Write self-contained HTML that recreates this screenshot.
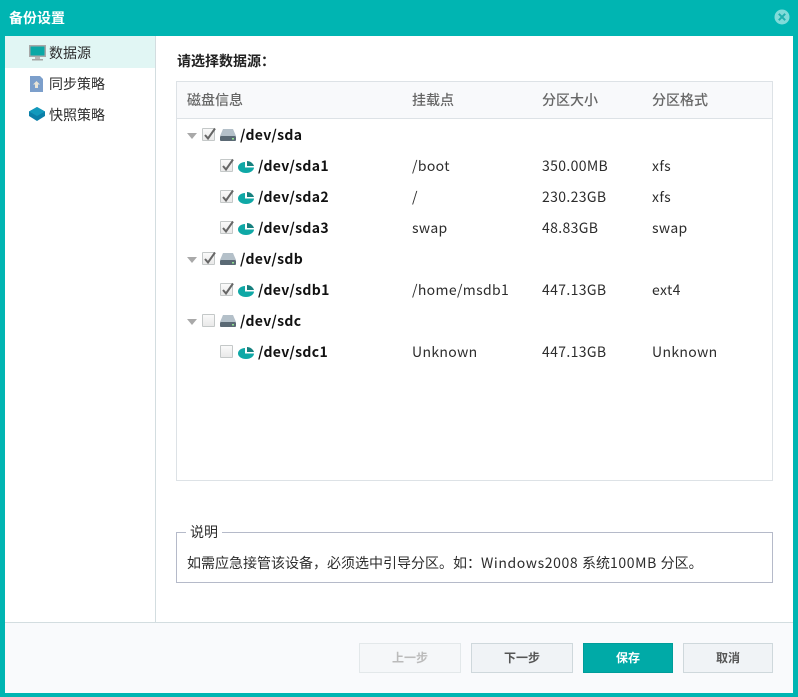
<!DOCTYPE html>
<html lang="zh">
<head>
<meta charset="utf-8">
<style>
html,body{margin:0;padding:0;}
body{width:798px;height:697px;position:relative;overflow:hidden;background:#00b5b2;font-family:"Noto Sans CJK SC","Liberation Sans",sans-serif;font-size:14px;color:#2c2c2c;}
.a{position:absolute;white-space:nowrap;line-height:20px;}
.l{letter-spacing:.35px;}
.box{position:absolute;box-sizing:border-box;}
.b{font-weight:700;color:#111;letter-spacing:.35px;}
.th{font-weight:500;color:#666;font-size:14px;}
.cb{position:absolute;width:13px;height:13px;box-sizing:border-box;border:1px solid #c4c8c8;background:linear-gradient(#fafafa,#e9e9e9);border-radius:1px;}
svg{position:absolute;overflow:visible;}
.btn{position:absolute;top:643px;height:30px;box-sizing:border-box;border:1px solid #cfd8dc;background:#f0f3f6;text-align:center;line-height:28px;font-size:12px;font-weight:700;color:#555;}
</style>
</head>
<body>
<div class="a" style="left:9px;top:8px;color:#fff;font-weight:700;font-size:14px;">备份设置</div>
<svg style="left:774px;top:9px" width="16" height="16" viewBox="0 0 16 16"><circle cx="8" cy="8" r="7.5" fill="#80dbd9"/><path d="M4.800 4.800L11.200 11.200M11.200 4.800L4.800 11.200" stroke="#1fb0ae" stroke-width="2"/></svg>

<div class="box" style="left:5px;top:36px;width:788px;height:657px;background:#fff;"></div>
<div class="box" style="left:155px;top:36px;width:1px;height:586px;background:#d3dde0;"></div>
<div class="box" style="left:5px;top:36px;width:150px;height:32px;background:#e1f6f4;"></div>

<svg style="left:29px;top:45px" width="17" height="16" viewBox="0 0 17 16"><rect x=".75" y=".75" width="15.500" height="10.500" fill="#0aa8a6" stroke="#a8a8a8" stroke-width="1.500"/><rect x="6" y="12" width="5" height="2" fill="#b5b5b5"/><rect x="3" y="14" width="11" height="1.500" fill="#a5a5a5"/></svg>
<div class="a" style="left:49px;top:43px;">数据源</div>
<svg style="left:30px;top:76px" width="13" height="16" viewBox="0 0 13 16"><path d="M0 0H10L13 3V16H0Z" fill="#7c9fcb"/><path d="M6.500 5L10 8.500H8V12H5V8.500H3Z" fill="#e9e4d6"/></svg>
<div class="a" style="left:49px;top:74px;">同步策略</div>
<svg style="left:29px;top:107px" width="16" height="14" viewBox="0 0 16 14"><path d="M8 0L16 4.500V9L8 14L0 9V4.500Z" fill="#0b7fa8"/><path d="M8 0L16 4.500L8 9L0 4.500Z" fill="#1299bc"/></svg>
<div class="a" style="left:49px;top:105px;">快照策略</div>

<div class="a" style="left:177px;top:51px;font-weight:700;color:#222;font-size:14px;">请选择数据源：</div>

<div class="box" style="left:176px;top:81px;width:597px;height:400px;border:1px solid #dde2e6;background:#fff;"></div>
<div class="box" style="left:177px;top:82px;width:595px;height:37px;background:#f8f9fb;border-bottom:1px solid #dde2e6;"></div>
<div class="a th" style="left:187px;top:90px;">磁盘信息</div>
<div class="a th" style="left:412px;top:90px;">挂载点</div>
<div class="a th" style="left:542px;top:90px;">分区大小</div>
<div class="a th" style="left:652px;top:90px;">分区格式</div>

<!-- sda -->
<svg style="left:187px;top:133px" width="10" height="6" viewBox="0 0 10 6"><path d="M0 0H10L5 6Z" fill="#a9a9a9"/></svg>
<div class="cb" style="left:202px;top:128px"></div>
<svg style="left:203px;top:128px" width="13" height="12" viewBox="0 0 13 12"><path d="M2 7L5 10.500L12 .5" fill="none" stroke="#666" stroke-width="2"/></svg>
<svg style="left:220px;top:129px" width="16" height="12" viewBox="0 0 16 12"><path d="M3 0H13L16 7H0Z" fill="#b4c0c9"/><rect y="7" width="16" height="5" rx="1" fill="#5a6974"/><rect x="12" y="9" width="2" height="1.500" fill="#8fe08f"/></svg>
<div class="a b" style="left:240px;top:125px;">/dev/sda</div>

<div class="cb" style="left:220px;top:159px"></div>
<svg style="left:221px;top:159px" width="13" height="12" viewBox="0 0 13 12"><path d="M2 7L5 10.500L12 .5" fill="none" stroke="#666" stroke-width="2"/></svg>
<svg style="left:238px;top:161px" width="16" height="12" viewBox="0 0 16 12"><path d="M7 1C3 1 0 3.500 0 6.500C0 9.500 3.500 12 8 12C12.500 12 16 9.500 16 6.500H7Z" fill="#0fa8a6"/><path d="M9 0C12 0 15 2 16 5H9Z" fill="#17807e"/></svg>
<div class="a b" style="left:258px;top:156px;">/dev/sda1</div>
<div class="a l" style="left:412px;top:156px;">/boot</div>
<div class="a l" style="left:542px;top:156px;">350.00MB</div>
<div class="a l" style="left:652px;top:156px;">xfs</div>

<div class="cb" style="left:220px;top:190px"></div>
<svg style="left:221px;top:190px" width="13" height="12" viewBox="0 0 13 12"><path d="M2 7L5 10.500L12 .5" fill="none" stroke="#666" stroke-width="2"/></svg>
<svg style="left:238px;top:192px" width="16" height="12" viewBox="0 0 16 12"><path d="M7 1C3 1 0 3.500 0 6.500C0 9.500 3.500 12 8 12C12.500 12 16 9.500 16 6.500H7Z" fill="#0fa8a6"/><path d="M9 0C12 0 15 2 16 5H9Z" fill="#17807e"/></svg>
<div class="a b" style="left:258px;top:187px;">/dev/sda2</div>
<div class="a l" style="left:412px;top:187px;">/</div>
<div class="a l" style="left:542px;top:187px;">230.23GB</div>
<div class="a l" style="left:652px;top:187px;">xfs</div>

<div class="cb" style="left:220px;top:221px"></div>
<svg style="left:221px;top:221px" width="13" height="12" viewBox="0 0 13 12"><path d="M2 7L5 10.500L12 .5" fill="none" stroke="#666" stroke-width="2"/></svg>
<svg style="left:238px;top:223px" width="16" height="12" viewBox="0 0 16 12"><path d="M7 1C3 1 0 3.500 0 6.500C0 9.500 3.500 12 8 12C12.500 12 16 9.500 16 6.500H7Z" fill="#0fa8a6"/><path d="M9 0C12 0 15 2 16 5H9Z" fill="#17807e"/></svg>
<div class="a b" style="left:258px;top:218px;">/dev/sda3</div>
<div class="a l" style="left:412px;top:218px;">swap</div>
<div class="a l" style="left:542px;top:218px;">48.83GB</div>
<div class="a l" style="left:652px;top:218px;">swap</div>

<!-- sdb -->
<svg style="left:187px;top:257px" width="10" height="6" viewBox="0 0 10 6"><path d="M0 0H10L5 6Z" fill="#a9a9a9"/></svg>
<div class="cb" style="left:202px;top:252px"></div>
<svg style="left:203px;top:252px" width="13" height="12" viewBox="0 0 13 12"><path d="M2 7L5 10.500L12 .5" fill="none" stroke="#666" stroke-width="2"/></svg>
<svg style="left:220px;top:253px" width="16" height="12" viewBox="0 0 16 12"><path d="M3 0H13L16 7H0Z" fill="#b4c0c9"/><rect y="7" width="16" height="5" rx="1" fill="#5a6974"/><rect x="12" y="9" width="2" height="1.500" fill="#8fe08f"/></svg>
<div class="a b" style="left:240px;top:249px;">/dev/sdb</div>

<div class="cb" style="left:220px;top:283px"></div>
<svg style="left:221px;top:283px" width="13" height="12" viewBox="0 0 13 12"><path d="M2 7L5 10.500L12 .5" fill="none" stroke="#666" stroke-width="2"/></svg>
<svg style="left:238px;top:285px" width="16" height="12" viewBox="0 0 16 12"><path d="M7 1C3 1 0 3.500 0 6.500C0 9.500 3.500 12 8 12C12.500 12 16 9.500 16 6.500H7Z" fill="#0fa8a6"/><path d="M9 0C12 0 15 2 16 5H9Z" fill="#17807e"/></svg>
<div class="a b" style="left:258px;top:280px;">/dev/sdb1</div>
<div class="a l" style="left:412px;top:280px;">/home/msdb1</div>
<div class="a l" style="left:542px;top:280px;">447.13GB</div>
<div class="a l" style="left:652px;top:280px;">ext4</div>

<!-- sdc -->
<svg style="left:187px;top:319px" width="10" height="6" viewBox="0 0 10 6"><path d="M0 0H10L5 6Z" fill="#a9a9a9"/></svg>
<div class="cb" style="left:202px;top:314px"></div>
<svg style="left:220px;top:315px" width="16" height="12" viewBox="0 0 16 12"><path d="M3 0H13L16 7H0Z" fill="#b4c0c9"/><rect y="7" width="16" height="5" rx="1" fill="#5a6974"/><rect x="12" y="9" width="2" height="1.500" fill="#8fe08f"/></svg>
<div class="a b" style="left:240px;top:311px;">/dev/sdc</div>

<div class="cb" style="left:220px;top:345px"></div>
<svg style="left:238px;top:347px" width="16" height="12" viewBox="0 0 16 12"><path d="M7 1C3 1 0 3.500 0 6.500C0 9.500 3.500 12 8 12C12.500 12 16 9.500 16 6.500H7Z" fill="#0fa8a6"/><path d="M9 0C12 0 15 2 16 5H9Z" fill="#17807e"/></svg>
<div class="a b" style="left:258px;top:342px;">/dev/sdc1</div>
<div class="a l" style="left:412px;top:342px;">Unknown</div>
<div class="a l" style="left:542px;top:342px;">447.13GB</div>
<div class="a l" style="left:652px;top:342px;">Unknown</div>

<!-- note -->
<div class="box" style="left:176px;top:532px;width:597px;height:51px;border:1px solid #b5bac9;"></div>
<div class="a" style="left:186px;top:522px;background:#fff;padding:0 4px;font-size:14px;">说明</div>
<div class="a" style="left:187px;top:553px;font-size:14px;">如需应急接管该设备，必须选中引导分区。如：<span class="l" style="letter-spacing:.6px">Windows2008 </span>系统<span class="l" style="letter-spacing:.6px">100MB </span>分区。</div>

<!-- footer -->
<div class="box" style="left:5px;top:622px;width:788px;height:71px;background:#f9fafc;border-top:1px solid #d3dde0;"></div>
<div class="btn" style="left:359px;width:102px;background:#f5f7f9;border-color:#e3e8ea;color:#bbb;">上一步</div>
<div class="btn" style="left:471px;width:102px;">下一步</div>
<div class="btn" style="left:583px;width:90px;background:#00aaa7;border-color:#009d9a;color:#fff;">保存</div>
<div class="btn" style="left:683px;width:90px;">取消</div>
</body>
</html>
